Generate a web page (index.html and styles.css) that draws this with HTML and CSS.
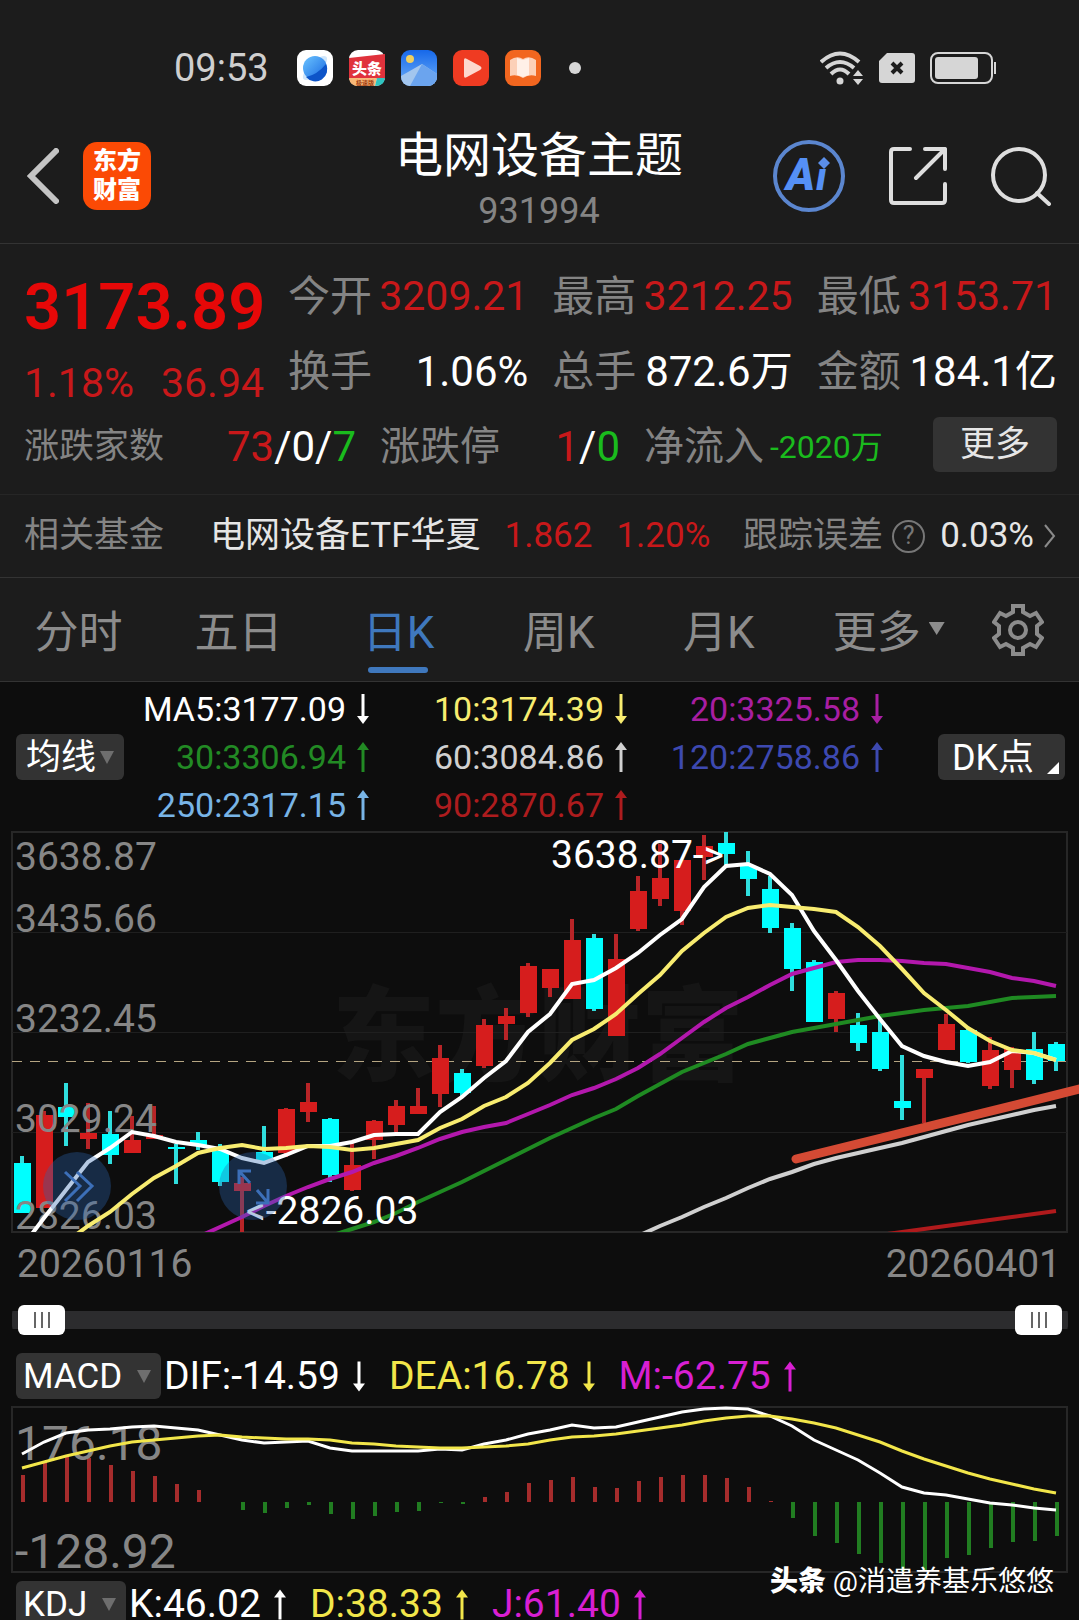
FILE: index.html
```html
<!DOCTYPE html>
<html lang="zh-CN">
<head>
    <meta charset="UTF-8">
    <meta name="viewport" content="width=device-width, initial-scale=1">
    <title>电网设备主题 931994</title>
    <link rel="stylesheet" href="styles.css">
</head>
<body>
<svg class="defs" width="0" height="0" aria-hidden="true">
    <symbol id="up" viewBox="0 0 12 30"><path d="M6 0L12 8H7.5V30H4.500V8H0z"/></symbol>
    <symbol id="down" viewBox="0 0 12 30"><path d="M6 30L12 22H7.5V0H4.500V22H0z"/></symbol>
</svg>
<div class="status">
    <span class="time">09:53</span>
    <div class="apps">
        <svg viewBox="0 0 36 36">
            <defs><linearGradient id="g1" x1="0" y1="0" x2="1" y2="1"><stop offset="0" stop-color="#6cc4ff"/><stop offset="1" stop-color="#1565e0"/></linearGradient></defs>
            <rect width="36" height="36" rx="9" fill="#fff"/>
            <ellipse cx="18" cy="18" rx="16" ry="6" fill="#cfe6fb" transform="rotate(-45 18 18)"/>
            <circle cx="18" cy="18" r="12" fill="url(#g1)"/>
            <path d="M9 27Q20 25 29 14A12 12 0 0 1 9 27z" fill="#0d54c8"/>
        </svg>
        <svg viewBox="0 0 36 36">
            <rect width="36" height="36" rx="9" fill="#fff"/>
            <path d="M0 8L36 4V29H0z" fill="#e0323c"/>
            <path d="M0 28H28L26 36H9Q1 36 0 28z" fill="#f8b878"/>
            <path d="M28 28H36Q35 36 26 36z" fill="#2fc4c0"/>
            <text class="app-name" x="18" y="24" text-anchor="middle">头条</text>
            <text class="app-sub" x="16" y="35" text-anchor="middle">极速版</text>
        </svg>
        <svg viewBox="0 0 36 36">
            <defs>
                <clipPath id="c1"><rect width="36" height="36" rx="9"/></clipPath>
                <linearGradient id="g2" x1="0" y1="0" x2="0" y2="1"><stop offset="0" stop-color="#1668ea"/><stop offset="1" stop-color="#6fb0f8"/></linearGradient>
            </defs>
            <g clip-path="url(#c1)">
                <rect width="36" height="36" fill="url(#g2)"/>
                <path d="M0 26L21 14L36 24V36H0z" fill="#a3c6ee"/>
                <path d="M21 14L36 24V36H9z" fill="#6ba4ee"/>
                <circle cx="9" cy="9" r="4" fill="#f0d060"/>
            </g>
        </svg>
        <svg viewBox="0 0 36 36">
            <rect width="36" height="36" rx="9" fill="#ef3b22"/>
            <path d="M11 10Q11 7 14 9L27 16Q30 18 27 20L14 27Q11 29 11 26z" fill="#fdd8ce"/>
        </svg>
        <svg viewBox="0 0 36 36">
            <rect width="36" height="36" rx="9" fill="#f2661f"/>
            <path d="M5 10Q12 5 18 9Q24 5 31 10V26Q24 24 18 28Q12 24 5 26z" fill="#fcd0b8"/>
            <path d="M12 8L18 10V27L12 25zM24 8V25L18 27V10z" fill="#fff0e8"/>
        </svg>
    </div>
    <i class="dot"></i>
    <div class="signal">
        <svg width="44" height="36" viewBox="0 0 44 36">
            <g fill="none" stroke="#d6d6d6" stroke-width="4">
                <path d="M1 12Q20 -5 39 12"/><path d="M6 18Q20 6 34 18"/><path d="M11 24Q20 15 29 24"/>
            </g>
            <circle cx="20" cy="31" r="3.500" fill="#d6d6d6"/>
            <path d="M38 20L43 26H33zM38 35L43 29H33z" fill="#d6d6d6"/>
        </svg>
        <svg width="36" height="30" viewBox="0 0 36 30">
            <path d="M8 0H33Q36 0 36 3V27Q36 30 33 30H3Q0 30 0 27V8z" fill="#d6d6d6"/>
            <path d="M13 10L23 20M23 10L13 20" stroke="#1c1c1c" stroke-width="4"/>
        </svg>
        <svg width="66" height="32" viewBox="0 0 66 32">
            <rect x="1" y="1" width="61" height="30" rx="7" fill="none" stroke="#d6d6d6" stroke-width="2"/>
            <rect x="5" y="5" width="43" height="22" rx="3" fill="#d6d6d6"/>
            <rect x="64" y="10" width="2" height="12" fill="#d6d6d6"/>
        </svg>
    </div>
</div>
<header class="header">
    <div class="side">
        <button class="icon-btn" aria-label="返回">
            <svg width="32" height="56" viewBox="0 0 32 56"><path d="M29 3L4 28L29 53" fill="none" stroke="#c4c4c4" stroke-width="6" stroke-linecap="round"/></svg>
        </button>
        <a class="logo" href="#">东方<br>财富</a>
    </div>
    <div class="title">
        <h1>电网设备主题</h1>
        <p>931994</p>
    </div>
    <div class="side tools">
        <button class="icon-btn" aria-label="Ai">
            <svg width="72" height="72" viewBox="0 0 72 72">
                <circle cx="36" cy="36" r="34" fill="none" stroke="#5b86cf" stroke-width="4"/>
                <text class="ai" x="13" y="50">A<tspan class="ai-i" x="43">ı</tspan></text>
                <path d="M51 17L57 23L51 29L45 23z" fill="#5b8fea"/>
            </svg>
        </button>
        <button class="icon-btn" aria-label="分享">
            <svg width="58" height="58" viewBox="0 0 58 58" fill="none" stroke="#dedede" stroke-width="4" stroke-linecap="round" stroke-linejoin="round">
                <path d="M21 2H5Q2 2 2 5V53Q2 56 5 56H53Q56 56 56 53V37M36 2H56V22M56 2L27 31"/>
            </svg>
        </button>
        <button class="icon-btn" aria-label="搜索">
            <svg width="60" height="60" viewBox="0 0 60 60" fill="none" stroke="#dedede" stroke-width="4" stroke-linecap="round">
                <circle cx="28" cy="29" r="26"/><path d="M46 47L58 58"/>
            </svg>
        </button>
    </div>
</header>
<section class="quote">
    <div class="top">
        <div class="price">
            <strong>3173.89</strong>
            <p><span>1.18%</span><span>36.94</span></p>
        </div>
        <dl class="nums">
            <div><dt>今开</dt><dd class="red">3209.21</dd></div>
            <div><dt>最高</dt><dd class="red">3212.25</dd></div>
            <div><dt>最低</dt><dd class="red">3153.71</dd></div>
            <div><dt>换手</dt><dd>1.06%</dd></div>
            <div><dt>总手</dt><dd>872.6万</dd></div>
            <div><dt>金额</dt><dd>184.1亿</dd></div>
        </dl>
    </div>
    <div class="counts">
        <div><span class="small">涨跌家数</span><b><i class="red">73</i>/0/<i class="green">7</i></b></div>
        <div><span>涨跌停</span><b><i class="red">1</i>/<i class="green">0</i></b></div>
        <div class="flow"><span>净流入</span><em>-2020万</em><button class="more">更多</button></div>
    </div>
</section>
<section class="fund">
    <span class="gray">相关基金</span>
    <a class="name" href="#">电网设备ETF华夏</a>
    <span class="red">1.862</span>
    <span class="red">1.20%</span>
    <span class="gray track">跟踪误差</span>
    <button class="help" aria-label="说明">?</button>
    <span class="err">0.03%</span>
    <svg class="go" width="12" height="24" viewBox="0 0 12 24"><path d="M1 1L10 12L1 23" fill="none" stroke="#8a8a8a" stroke-width="2"/></svg>
</section>
<nav class="tabs">
    <button>分时</button>
    <button>五日</button>
    <button class="on">日K</button>
    <button>周K</button>
    <button>月K</button>
    <button class="menu">更多<i></i></button>
    <button class="gear" aria-label="设置">
        <svg width="52" height="52" viewBox="0 0 52 52" fill="none" stroke="#8c8c8c" stroke-width="4">
            <path d="M21 2H31V8L38 12L44 9L50 18L45 22V30L50 34L44 43L38 40L31 44V50H21V44L14 40L8 43L2 34L7 30V22L2 18L8 9L14 12L21 8z"/>
            <circle cx="26" cy="26" r="8"/>
        </svg>
    </button>
</nav>
<main class="charts">
    <div class="ma">
        <label class="pick"><select aria-label="均线"><option>均线</option></select></label>
        <ul>
            <li class="m5">MA5:3177.09<svg><use href="#down"/></svg></li>
            <li class="m10">10:3174.39<svg><use href="#down"/></svg></li>
            <li class="m20">20:3325.58<svg><use href="#down"/></svg></li>
            <li class="m30">30:3306.94<svg><use href="#up"/></svg></li>
            <li class="m60">60:3084.86<svg><use href="#up"/></svg></li>
            <li class="m120">120:2758.86<svg><use href="#up"/></svg></li>
            <li class="m250">250:2317.15<svg><use href="#up"/></svg></li>
            <li class="m90">90:2870.67<svg><use href="#up"/></svg></li>
        </ul>
        <button class="dk">DK点</button>
    </div>
    <svg class="chart" viewBox="0 -1 1079 402">
        <defs><clipPath id="box"><rect x="12" y="-1" width="1056" height="401"/></clipPath></defs>
        <text class="mark" x="332" y="241">东方财富</text>
        <rect class="frame" x="12" y="0" width="1055" height="400"/>
        <path class="grid" d="M12 100H1067M12 200H1067M12 300H1067"/>
        <path class="now" d="M12 229H1067"/>
        <g id="candles"></g>
        <g class="axis">
            <text x="15" y="38">3638.87</text>
            <text x="15" y="100">3435.66</text>
            <text x="15" y="200">3232.45</text>
            <text x="15" y="300">3029.24</text>
            <text x="15" y="397">2826.03</text>
        </g>
        <g id="lines" clip-path="url(#box)"></g>
        <text class="peak" x="551" y="36">3638.87-&gt;</text>
        <text class="peak" x="246" y="392">&lt;-2826.03</text>
        <path class="trend" d="M796 327L1084 256"/>
        <g class="float">
            <circle cx="77" cy="354" r="34"/>
            <path d="M65 340L80 354L65 369M77 340L92 354L77 369"/>
            <circle cx="253" cy="354" r="34"/>
            <path d="M251 339H239V352M239 339L250 351M256 371H268V357M268 371L257 358"/>
        </g>
    </svg>
    <div class="dates"><span>20260116</span><span>20260401</span></div>
    <div class="range">
        <input type="range" min="0" max="100" value="0" aria-label="开始日期">
        <input type="range" min="0" max="100" value="100" aria-label="结束日期">
    </div>
    <div class="index">
        <label class="pick macd"><select aria-label="指标一"><option>MACD</option></select></label>
        <span class="w">DIF:-14.59<svg><use href="#down"/></svg></span>
        <span class="y">DEA:16.78<svg><use href="#down"/></svg></span>
        <span class="p">M:-62.75<svg><use href="#up"/></svg></span>
    </div>
    <svg class="chart" viewBox="0 -1 1079 167">
        <rect class="frame" x="12" y="0" width="1055" height="165"/>
        <g id="bars"></g>
        <g class="axis big">
            <text x="15" y="53">176.18</text>
            <text x="15" y="161">-128.92</text>
        </g>
        <g id="macd"></g>
    </svg>
    <div class="index kdj">
        <label class="pick"><select aria-label="指标二"><option>KDJ</option></select></label>
        <span class="w">K:46.02<svg><use href="#up"/></svg></span>
        <span class="y">D:38.33<svg><use href="#up"/></svg></span>
        <span class="p">J:61.40<svg><use href="#up"/></svg></span>
    </div>
</main>
<div class="author"><b>头条</b> @消遣养基乐悠悠</div>
<script>
    var STEP = 22;
    // 每根K线: 颜色, 最高, 实体上沿, 实体下沿, 最低
    var candles = [
        ["c",324,331,381,381],["r",279,283,376,376],["c",251,275,285,314],["r",271,301,307,317],
        ["c",279,302,323,332],["r",284,308,321,321],["r",274,303,307,307],["c",312,315,317,352],
        ["c",300,308,313,318],["c",312,319,350,354],["r",345,351,359,400],["c",294,320,330,330],
        ["r",276,277,321,325],["r",251,270,280,290],["c",286,287,343,350],["r",311,333,358,359],
        ["r",288,289,308,327],["r",268,274,293,300],["r",256,274,282,282],["r",213,226,262,275],
        ["c",237,241,261,264],["r",187,193,234,236],["r",176,184,192,208],["r",131,134,181,185],
        ["r",137,137,156,165],["r",87,108,167,167],["c",102,106,177,179],["r",102,127,204,204],
        ["r",44,59,97,99],["r",12,46,67,74],["r",28,28,79,93],["r",3,14,25,48],
        ["c",0,11,22,35],["c",19,34,47,64],["c",44,57,96,101],["c",91,96,137,159],
        ["c",128,130,190,190],["r",159,161,187,200],["c",181,193,211,219],["c",188,200,237,239],
        ["c",223,269,276,288],["r",237,237,246,291],["r",182,192,218,218],["c",197,198,230,231],
        ["r",205,218,254,257],["r",215,217,238,256],["c",200,217,248,252],["c",210,212,229,239]
    ];
    // 均线: 起始下标, 颜色, 各点
    var lines = [
        [28,"#d0d0d0",[404,394,385,375,366,356,347,340,332,326,321,316,311,305,299,293,288,283,278,274]],
        [39,"#b01a1c",[403,400,397,394,391,388,385,382,379]],
        [14,"#1f8a22",[404,397,390,381,370,360,350,339,328,317,306,296,286,277,264,252,240,231,222,212,206,200,196,192,188,184,181,178,176,174,170,166,165,164]],
        [8,"#b318ad",[405,395,385,374,364,355,347,340,331,324,316,307,300,295,291,282,273,263,256,247,236,222,206,190,176,165,153,142,136,130,128,128,129,131,132,136,140,146,149,154]],
        [0,"#fff",[415,386,358,330,316,300,304,310,313,317,326,331,323,314,314,310,303,302,302,280,265,246,229,200,182,152,148,136,121,103,87,55,34,32,42,63,99,128,159,187,214,224,230,234,230,219,221,228]],
        [2,"#f8ec70",[410,394,380,362,346,334,321,316,313,317,316,314,315,318,316,312,308,296,287,274,265,251,231,208,197,182,162,143,119,101,85,76,73,75,77,80,95,114,137,161,178,196,209,218,221,228]]
    ];
    var bars = [27,41,46,44,37,31,26,18,12,0,-8,-11,-6,-3,-12,-17,-14,-10,-9,-1,-2,5,10,19,22,25,15,14,21,25,27,27,24,15,1,-16,-34,-41,-52,-61,-69,-69,-56,-53,-46,-40,-39,-34];
    var dif = [47,35,26,23,22,20,19,21,23,28,33,36,35,34,41,44,44,44,44,42,43,37,33,27,23,18,21,20,15,10,5,2,1,2,9,19,33,43,53,66,80,86,88,92,96,98,101,103];
    var dea = [61,55,49,44,39,35,33,31,29,28,30,31,32,32,33,36,37,39,40,41,41,40,39,37,33,30,29,27,24,21,18,14,11,9,9,12,16,21,28,35,44,52,59,66,72,77,82,86];

    function add(id, tag, attrs) {
        var el = document.createElementNS("http://www.w3.org/2000/svg", tag);
        for (var k in attrs) {
            el.setAttribute(k, attrs[k]);
        }
        document.getElementById(id).appendChild(el);
    }
    function drawLine(id, start, color, ys) {
        var pts = [];
        for (var i = 0; i < ys.length; i++) {
            pts.push((22 + (start + i) * STEP) + "," + ys[i]);
        }
        add(id, "polyline", {points: pts.join(" "), stroke: color});
    }

    for (var i = 0; i < candles.length; i++) {
        var c = candles[i], x = 22 + i * STEP;
        add("candles", "rect", {"class": c[0] + " wick", x: x - 2, y: c[1], width: 4, height: c[4] - c[1]});
        add("candles", "rect", {"class": c[0], x: x - 8, y: c[2], width: 17, height: c[3] - c[2]});
    }
    for (i = 0; i < lines.length; i++) {
        drawLine("lines", lines[i][0], lines[i][1], lines[i][2]);
    }
    for (i = 0; i < bars.length; i++) {
        var v = bars[i];
        add("bars", "rect", {"class": v > 0 ? "up" : "down", x: 21 + i * STEP, y: v > 0 ? 95 - v : 95, width: 4, height: Math.abs(v)});
    }
    drawLine("macd", 0, "#fff", dif);
    drawLine("macd", 0, "#f2e64a", dea);
</script>
</body>
</html>
```
FILE: styles.css
```css
* {
    margin: 0;
    padding: 0;
    box-sizing: border-box;
}
body {
    position: relative;
    height: 100vh;
    overflow: hidden;
    background-color: #0d0d0d;
    color: #fff;
    font-family: Roboto, "Noto Sans CJK SC", sans-serif;
}
button, select {
    border: 0;
    background: none;
    color: inherit;
    font-family: inherit;
    font-size: inherit;
}
ul {
    list-style-type: none;
}
a {
    color: inherit;
    text-decoration: none;
}
i, em {
    font-style: normal;
}
svg {
    display: block;
    flex: none;
}
.defs {
    position: absolute;
}
.red {
    color: #c8181a;
}
.green {
    color: #1abb1d;
}
.gray {
    color: #848484;
}

/* 状态栏 */
.status {
    display: flex;
    align-items: center;
    height: 86px;
    padding: 50px 83px 0 174px;
    background-color: #1c1c1c;
}
.time {
    width: 123px;
    color: #cfcfcf;
    font-size: 38px;
    line-height: 36px;
}
.apps {
    display: flex;
    gap: 16px;
}
.apps svg {
    width: 36px;
    height: 36px;
}
.app-name {
    fill: #fff;
    font-size: 15px;
    font-weight: 900;
}
.app-sub {
    fill: #a03c10;
    font-size: 6px;
    font-weight: 700;
}
.dot {
    width: 12px;
    height: 12px;
    margin-left: 28px;
    border-radius: 50%;
    background-color: #d6d6d6;
}
.signal {
    display: flex;
    align-items: center;
    gap: 15px;
    margin-left: auto;
}

/* 标题 */
.header {
    display: grid;
    grid-template-columns: 1fr auto 1fr;
    align-items: center;
    height: 158px;
    padding: 22px 28px 0 27px;
    border-bottom: 1px solid #333;
    background-color: #1c1c1c;
}
.side {
    display: flex;
    align-items: center;
    gap: 24px;
}
.tools {
    justify-content: flex-end;
    gap: 44px;
}
.logo {
    width: 68px;
    height: 68px;
    padding-top: 5px;
    border-radius: 14px;
    background-color: #fb4a05;
    font-size: 24px;
    font-weight: 900;
    line-height: 29px;
    text-align: center;
}
.ai {
    fill: #5590f5;
    font-size: 44px;
    font-style: italic;
    font-weight: 900;
}
.ai-i {
    font-size: 38px;
}
.title {
    padding-top: 10px;
    text-align: center;
}
.title h1 {
    font-size: 48px;
    font-weight: 400;
    line-height: 56px;
}
.title p {
    margin-top: 5px;
    color: #848484;
    font-size: 36px;
    line-height: 44px;
}

/* 行情 */
.quote {
    padding: 15px 22px 17px 24px;
    border-bottom: 1px solid #262626;
    background-color: #1c1c1c;
}
.top {
    display: flex;
}
.price {
    width: 264px;
    padding-top: 10px;
    color: #c8181a;
    font-size: 41px;
}
.price strong {
    display: block;
    color: #e60808;
    font-size: 65px;
    font-weight: 600;
    line-height: 76px;
}
.price p {
    display: flex;
    justify-content: space-between;
    width: 240px;
    line-height: 76px;
}
.nums {
    display: grid;
    flex: 1;
    grid-template-columns: repeat(3, 1fr);
    column-gap: 24px;
    align-content: start;
    font-size: 42px;
    line-height: 75px;
}
.nums div {
    display: flex;
    justify-content: space-between;
}
.nums dt {
    color: #848484;
}
.nums .red {
    font-size: 41px;
}
.counts {
    display: grid;
    grid-template-columns: 332fr 240fr 413fr;
    gap: 24px;
    margin-top: -4px;
    font-size: 42px;
    line-height: 60px;
}
.counts div {
    display: flex;
    justify-content: space-between;
}
.counts span {
    color: #848484;
    font-size: 40px;
}
.counts .small {
    font-size: 35px;
}
.counts b {
    font-weight: 400;
}
.counts .flow {
    justify-content: flex-start;
}
.flow em {
    margin-left: 6px;
    color: #1abb1d;
    font-size: 32px;
}
.more {
    width: 124px;
    height: 55px;
    margin-left: auto;
    border-radius: 6px;
    background-color: #333;
    color: #e6e6e6;
    font-size: 35px;
    line-height: 48px;
}

/* 相关基金 */
.fund {
    display: flex;
    align-items: center;
    height: 83px;
    padding: 0 23px 0 24px;
    border-bottom: 1px solid #333;
    background-color: #1c1c1c;
    font-size: 35px;
    line-height: 42px;
}
.fund .name {
    margin-left: 46px;
    color: #e6e6e6;
}
.fund .red {
    margin-left: 24px;
}
.fund .track {
    margin-left: auto;
}
.help {
    width: 33px;
    height: 33px;
    margin: 0 15px 0 9px;
    border: 2px solid #777;
    border-radius: 50%;
    color: #777;
    font-size: 25px;
    line-height: 28px;
}
.err {
    color: #e6e6e6;
}
.go {
    margin-left: 10px;
}

/* 周期 */
.tabs {
    display: flex;
    height: 104px;
    border-bottom: 1px solid #333;
    background-color: #1c1c1c;
    color: #8c8c8c;
    font-size: 44px;
}
.tabs button {
    flex: 160;
    padding: 0 3px 2px 0;
}
.tabs .on {
    position: relative;
    color: #3f78bd;
}
.tabs .on::after {
    position: absolute;
    bottom: 8px;
    left: 50%;
    width: 60px;
    height: 6px;
    margin-left: -32px;
    border-radius: 3px;
    background-color: #3f78bd;
    content: "";
}
.tabs .menu {
    display: flex;
    flex: 180;
    align-items: center;
    justify-content: center;
    gap: 8px;
}
.menu i {
    width: 16px;
    height: 13px;
    background-color: #8c8c8c;
    clip-path: polygon(0 0, 100% 0, 50% 100%);
}
.tabs .gear {
    flex: none;
    width: 99px;
    padding: 0 0 0 12px;
}

/* 均线 */
.ma {
    display: flex;
    align-items: center;
    padding: 3px 14px 2px 16px;
}
.pick {
    position: relative;
    display: block;
}
.pick::after {
    position: absolute;
    top: 17px;
    right: 10px;
    width: 14px;
    height: 13px;
    background-color: #6e6e6e;
    clip-path: polygon(0 0, 100% 0, 50% 100%);
    content: "";
    pointer-events: none;
}
.pick select {
    display: block;
    width: 108px;
    height: 46px;
    padding: 0 10px;
    border-radius: 6px;
    background-color: #333;
    font-size: 35px;
    appearance: none;
}
.ma ul {
    display: grid;
    flex: 1;
    grid-template-columns: 245fr 258fr 256fr;
    font-size: 34px;
    line-height: 48px;
}
.ma li {
    display: flex;
    align-items: center;
    justify-content: flex-end;
    gap: 11px;
}
.ma li svg {
    width: 12px;
    height: 30px;
    fill: currentColor;
}
.m10 {
    color: #f8ec70;
}
.m20 {
    color: #a81ea2;
}
.m30 {
    color: #228a24;
}
.m60 {
    color: #d0d0d0;
}
.m120 {
    color: #3d49b0;
}
.m250 {
    color: #78b4e6;
}
.m90 {
    color: #ad1c1e;
}
.dk {
    position: relative;
    width: 127px;
    height: 46px;
    margin-left: 55px;
    padding-right: 17px;
    border-radius: 6px;
    background-color: #333;
    font-size: 36px;
    line-height: 48px;
}
.dk::after {
    position: absolute;
    right: 6px;
    bottom: 6px;
    width: 12px;
    height: 12px;
    background-color: #fff;
    clip-path: polygon(100% 0, 100% 100%, 0 100%);
    content: "";
}

/* K线图 */
.chart {
    width: 100%;
}
.frame {
    fill: none;
    stroke: #272727;
    stroke-width: 2;
}
.grid {
    stroke: #1f1f1f;
    shape-rendering: crispEdges;
}
.now {
    stroke: #b5a582;
    stroke-dasharray: 10 8;
    shape-rendering: crispEdges;
}
.mark {
    fill: #151515;
    font-size: 103px;
    font-weight: 900;
}
.axis {
    fill: #868686;
    font-size: 39px;
}
.big {
    font-size: 48px;
}
.peak {
    fill: #fff;
    font-size: 39px;
}
.c {
    fill: #00ffff;
}
.r {
    fill: #d61d1d;
}
.c.wick {
    fill: #2fdede;
}
.r.wick {
    fill: #b82427;
}
.up {
    fill: #a62c2c;
}
.down {
    fill: #217d21;
}
#lines {
    fill: none;
    stroke-width: 4;
}
#macd {
    fill: none;
    stroke-width: 3;
}
.trend {
    fill: none;
    stroke: #d44a34;
    stroke-width: 9;
    stroke-linecap: round;
}
.float circle {
    fill: #2a64b0;
    fill-opacity: .35;
}
.float path {
    fill: none;
    stroke: #3c6fb8;
    stroke-width: 3;
}
.dates {
    display: flex;
    justify-content: space-between;
    padding: 0 18px 0 17px;
    color: #868686;
    font-size: 39px;
    line-height: 62px;
}

/* 区间滑块 */
.range {
    display: grid;
    align-items: center;
    height: 30px;
    margin: 10px 11px 0 12px;
    padding: 0 6px;
    border-radius: 9px;
    background: linear-gradient(#2c2c2e, #2c2c2e) center / 100% 18px no-repeat;
}
.range input {
    grid-area: 1 / 1;
    width: 100%;
    height: 30px;
    background: none;
    appearance: none;
    pointer-events: none;
}
.range input::-webkit-slider-thumb {
    width: 47px;
    height: 30px;
    border-radius: 6px;
    background: repeating-linear-gradient(90deg, #666 0 2px, #fff 2px 7px) center / 16px 16px no-repeat, #fff;
    appearance: none;
    pointer-events: auto;
}

/* 指标 */
.index {
    display: flex;
    align-items: center;
    height: 46px;
    margin: 18px 16px 7px;
    font-size: 39px;
}
.index.kdj {
    margin: 8px 16px 0;
}
.index select {
    width: 110px;
    padding: 0 7px;
}
.macd select {
    width: 145px;
}
.index span {
    display: flex;
    align-items: center;
    gap: 13px;
    margin-right: 24px;
}
.index .w {
    margin-left: 3px;
}
.index span svg {
    width: 12px;
    height: 35px;
    fill: currentColor;
}
.y {
    color: #f2e64a;
}
.p {
    color: #d81fd2;
}
.author {
    position: absolute;
    right: 25px;
    bottom: 18px;
    font-size: 28px;
    line-height: 40px;
}
.author b {
    font-weight: 900;
}
```
